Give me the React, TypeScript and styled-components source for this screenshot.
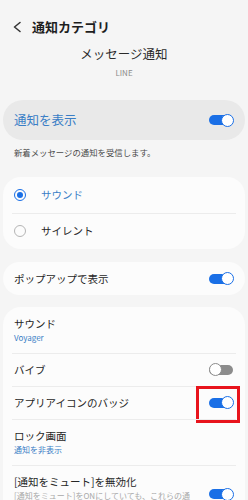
import React from "react";
import styled, { createGlobalStyle } from "styled-components";

const Global = createGlobalStyle`
  html, body { margin: 0; padding: 0; background: #f5f5f5; overflow: hidden; }
  body { font-family: "Noto Sans CJK JP", "Noto Sans", sans-serif; color: #222; }
  * { box-sizing: border-box; }
`;

const Page = styled.div`
  width: 248px;
  display: flex;
  flex-direction: column;
  padding-top: 18px;
`;

const TitleRow = styled.div`
  display: flex;
  align-items: center;
  height: 18px;
  padding-left: 13px;
  gap: 11px;
`;

const Title = styled.div`
  font-size: 13px;
  font-weight: 700;
  line-height: 18px;
  color: #1e1e1e;
`;

const Subtitle = styled.div`
  margin-top: 9px;
  text-align: center;
  font-size: 12.5px;
  line-height: 18px;
  color: #2a2a2a;
`;

const AppName = styled.div`
  margin-top: 4px;
  text-align: center;
  font-size: 8px;
  line-height: 12px;
  color: #8c8c8c;
`;

const Card = styled.div<{ $tone?: "gray" | "white"; $mt: number }>`
  margin: ${(p) => p.$mt}px 3px 0;
  background: ${(p) => (p.$tone === "gray" ? "#e9e9e9" : "#fcfcfc")};
  border-radius: ${(p) => (p.$tone === "gray" ? 20 : 18)}px;
  display: flex;
  flex-direction: column;
`;

const Row = styled.div<{ $h?: number; $divider?: boolean }>`
  position: relative;
  display: flex;
  align-items: center;
  justify-content: space-between;
  min-height: ${(p) => p.$h ?? 33}px;
  padding: 0 12px 0 11px;
  ${(p) =>
    p.$divider
      ? `&::before { content: ""; position: absolute; top: 0; left: 9px; right: 9px; height: 1px; background: #ececec; }`
      : ""}
`;

const TextCol = styled.div<{ $pad?: number }>`
  display: flex;
  flex-direction: column;
  padding: ${(p) => p.$pad ?? 0}px 0;
`;

const Label = styled.div<{ $blue?: boolean; $size?: number }>`
  font-size: ${(p) => p.$size ?? 10.5}px;
  line-height: 16px;
  color: ${(p) => (p.$blue ? "#3a7ec6" : "#262626")};
`;

const Sub = styled.div<{ $blue?: boolean }>`
  font-size: 8px;
  line-height: 12px;
  color: ${(p) => (p.$blue ? "#3a7ec6" : "#a8a8a8")};
  max-width: 180px;
`;

const Desc = styled.div`
  margin-top: 6px;
  padding-left: 14px;
  font-size: 8.4px;
  line-height: 12px;
  color: #4a4a4a;
`;

const RadioRow = styled.div<{ $divider?: boolean }>`
  position: relative;
  display: flex;
  align-items: center;
  height: 36px;
  padding-left: 11px;
  gap: 15px;
  ${(p) =>
    p.$divider
      ? `&::before { content: ""; position: absolute; top: 0; left: 9px; right: 9px; height: 1px; background: #ececec; }`
      : ""}
`;

const RadioCircle = styled.div<{ $on?: boolean }>`
  width: 12px;
  height: 12px;
  border-radius: 50%;
  border: 1.5px solid ${(p) => (p.$on ? "#1a6fe6" : "#b5b5b5")};
  display: flex;
  align-items: center;
  justify-content: center;
  &::after {
    content: "";
    display: ${(p) => (p.$on ? "block" : "none")};
    width: 6px;
    height: 6px;
    border-radius: 50%;
    background: #1a6fe6;
  }
`;

const SwitchWrap = styled.div`
  position: relative;
  flex: none;
`;

const Track = styled.div<{ $on?: boolean }>`
  position: relative;
  width: 24px;
  height: 10px;
  border-radius: 5px;
  background: ${(p) => (p.$on ? "#1a6fe6" : "#8c8c8c")};
`;

const Knob = styled.div<{ $on?: boolean }>`
  position: absolute;
  top: -1.5px;
  ${(p) => (p.$on ? "right: -0.5px;" : "left: -0.5px;")}
  width: 13px;
  height: 13px;
  border-radius: 50%;
  background: #fff;
  border: 1.5px solid ${(p) => (p.$on ? "#1a6fe6" : "#8c8c8c")};
`;

const Highlight = styled.div`
  position: absolute;
  left: -13px;
  right: -7px;
  top: -11.5px;
  bottom: -15.5px;
  border: 3.5px solid #e8141c;
  pointer-events: none;
`;

const Toggle = ({ on, mark }: { on?: boolean; mark?: boolean }) => (
  <SwitchWrap>
    <Track $on={on}>
      <Knob $on={on} />
    </Track>
    {mark && <Highlight />}
  </SwitchWrap>
);

const Back = () => (
  <svg width="8" height="12" viewBox="0 0 8 12">
    <polyline points="7,1.5 1.5,6 7,10.5" fill="none" stroke="#333" strokeWidth="1.5" strokeLinejoin="round" strokeLinecap="round" />
  </svg>
);

export default function App() {
  return (
    <>
      <Global />
      <Page>
        <TitleRow>
          <Back />
          <Title>通知カテゴリ</Title>
        </TitleRow>
        <Subtitle>メッセージ通知</Subtitle>
        <AppName>LINE</AppName>

        <Card $tone="gray" $mt={21}>
          <Row $h={40}>
            <Label $blue $size={12.5}>通知を表示</Label>
            <Toggle on />
          </Row>
        </Card>
        <Desc>新着メッセージの通知を受信します。</Desc>

        <Card $mt={19}>
          <RadioRow>
            <RadioCircle $on />
            <Label $blue>サウンド</Label>
          </RadioRow>
          <RadioRow $divider>
            <RadioCircle />
            <Label>サイレント</Label>
          </RadioRow>
        </Card>

        <Card $mt={13}>
          <Row>
            <Label>ポップアップで表示</Label>
            <Toggle on />
          </Row>
        </Card>

        <Card $mt={12}>
          <Row $h={46}>
            <TextCol $pad={7}>
              <Label>サウンド</Label>
              <Sub $blue>Voyager</Sub>
            </TextCol>
          </Row>
          <Row $divider>
            <Label>バイブ</Label>
            <Toggle />
          </Row>
          <Row $divider>
            <Label>アプリアイコンのバッジ</Label>
            <Toggle on mark />
          </Row>
          <Row $h={46} $divider>
            <TextCol $pad={9}>
              <Label>ロック画面</Label>
              <Sub $blue>通知を非表示</Sub>
            </TextCol>
          </Row>
          <Row $h={58} $divider>
            <TextCol $pad={9}>
              <Label>[通知をミュート]を無効化</Label>
              <Sub>[通知をミュート]をONにしていても、これらの通知は表示されます。</Sub>
            </TextCol>
            <Toggle on />
          </Row>
        </Card>
      </Page>
    </>
  );
}
